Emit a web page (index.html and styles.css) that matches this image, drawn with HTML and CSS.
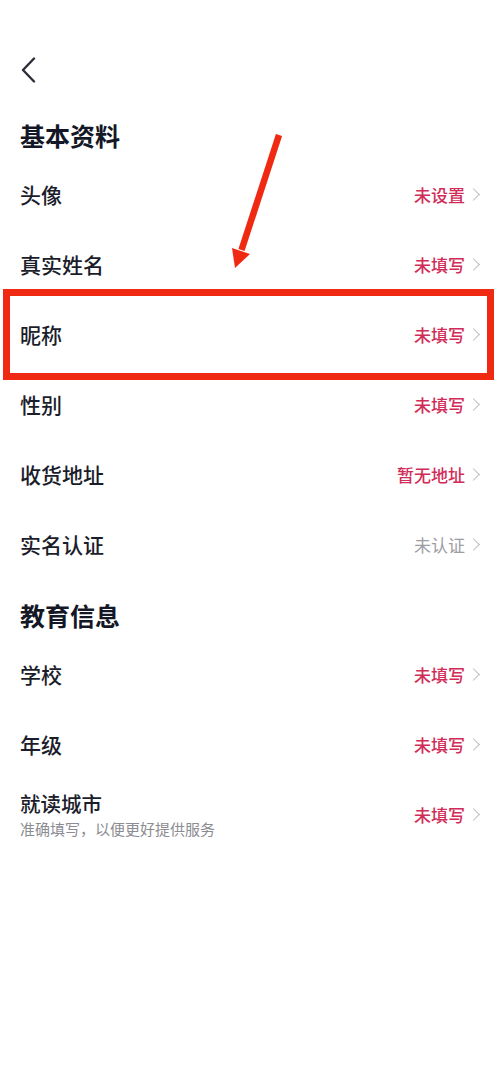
FILE: index.html
```html
<!DOCTYPE html>
<html lang="zh-CN">
<head>
<meta charset="utf-8">
<title>个人资料</title>
<link rel="stylesheet" href="styles.css">
</head>
<body>
<div class="page">
  <div class="nav">
    <svg class="back" width="18" height="26" viewBox="0 0 18 26"><path d="M14 1.5 L3 13 L14 24.5" fill="none" stroke="#2b2d38" stroke-width="2.4" stroke-linecap="round" stroke-linejoin="round"/></svg>
  </div>

  <div class="section-title">基本资料</div>
  <div class="row"><span class="label">头像</span><span class="value">未设置<i class="chev"></i></span></div>
  <div class="row"><span class="label">真实姓名</span><span class="value">未填写<i class="chev"></i></span></div>
  <div class="row"><span class="label">昵称</span><span class="value">未填写<i class="chev"></i></span></div>
  <div class="row"><span class="label">性别</span><span class="value">未填写<i class="chev"></i></span></div>
  <div class="row"><span class="label">收货地址</span><span class="value">暂无地址<i class="chev"></i></span></div>
  <div class="row"><span class="label">实名认证</span><span class="value muted">未认证<i class="chev"></i></span></div>

  <div class="section-title">教育信息</div>
  <div class="row"><span class="label">学校</span><span class="value">未填写<i class="chev"></i></span></div>
  <div class="row"><span class="label">年级</span><span class="value">未填写<i class="chev"></i></span></div>
  <div class="row">
    <div class="label-group"><span class="label">就读城市</span><span class="sub">准确填写，以便更好提供服务</span></div>
    <span class="value">未填写<i class="chev"></i></span>
  </div>

  <div class="highlight"></div>
  <svg class="arrow" width="500" height="300" viewBox="0 0 500 300">
    <line x1="279" y1="135" x2="241.5" y2="250" stroke="#f02a12" stroke-width="6.5"/>
    <polygon points="235,268 250,254 232,248" fill="#f02a12"/>
  </svg>
</div>
</body>
</html>
```

FILE: styles.css
```css
html, body {
  margin: 0;
  padding: 0;
  background: #ffffff;
}
body {
  font-family: "Noto Sans CJK SC", "Noto Sans", sans-serif;
  color: #1b1d2b;
}
.page {
  position: relative;
  width: 500px;
  min-height: 1084px;
}
.nav {
  height: 99px;
  display: flex;
  align-items: flex-start;
  padding-left: 20px;
  box-sizing: border-box;
  padding-top: 57px;
}
.back {
  display: block;
}
.section-title {
  padding: 16px 20px 0;
  height: 40px;
  line-height: 40px;
  font-size: 25px;
  font-weight: 700;
  color: #141726;
  margin-bottom: 4px;
}
.row {
  height: 70px;
  display: flex;
  align-items: center;
  justify-content: space-between;
  padding: 0 19px 0 20px;
}
.label {
  font-size: 21px;
  font-weight: 500;
  color: #1b1d2b;
  line-height: 28px;
}
.label-group {
  display: flex;
  flex-direction: column;
  gap: 0;
}
.label-group .label {
  font-size: 20.5px;
  line-height: 30px;
}
.sub {
  font-size: 15px;
  color: #8c8c92;
  line-height: 22px;
}
.value {
  display: flex;
  align-items: center;
  font-size: 17px;
  color: #d12c58;
  font-weight: 500;
}
.value.muted {
  color: #9d9da4;
  font-weight: 400;
}
.chev {
  display: inline-block;
  width: 8px;
  height: 8px;
  border-top: 1.5px solid #bdbdc2;
  border-right: 1.5px solid #bdbdc2;
  transform: rotate(45deg);
  margin-left: 4px;
  margin-right: 3px;
}
.highlight {
  position: absolute;
  left: 3px;
  top: 289px;
  width: 491px;
  height: 91px;
  box-sizing: border-box;
  border: 7px solid #f02a12;
  pointer-events: none;
}
.arrow {
  position: absolute;
  left: 0;
  top: 0;
  pointer-events: none;
}
```
